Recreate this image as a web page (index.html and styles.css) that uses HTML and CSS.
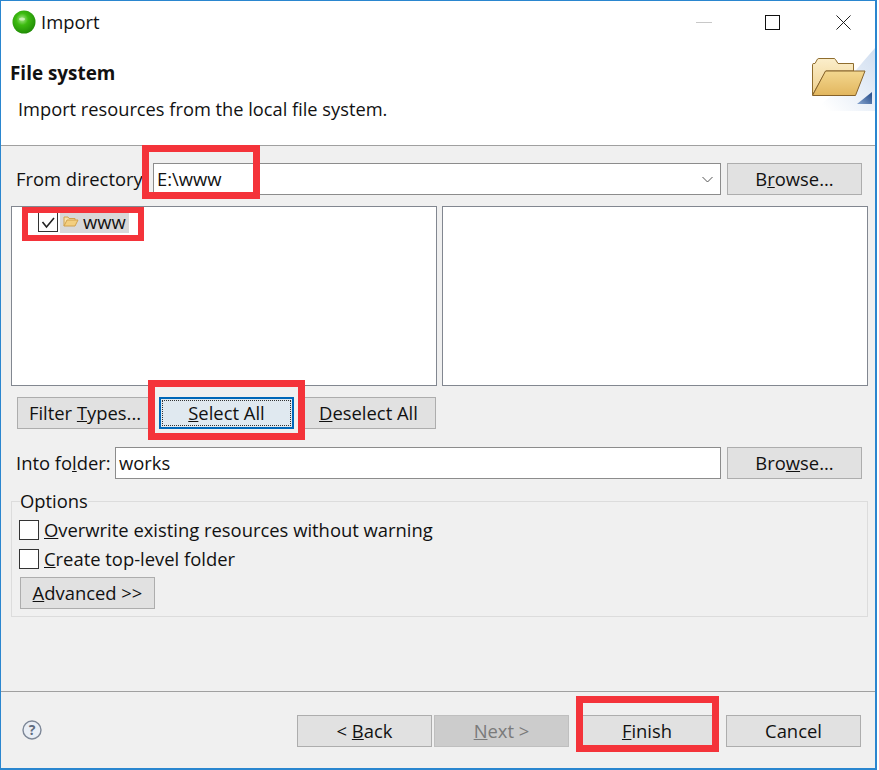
FILE: index.html
```html
<!DOCTYPE html>
<html lang="en">
<head>
<meta charset="utf-8">
<title>Import</title>
<link rel="stylesheet" href="styles.css">
</head>
<body>
<div class="window">
  <header class="titlebar">
    <svg class="app-icon" viewBox="0 0 24 24" aria-hidden="true">
      <defs>
        <radialGradient id="ball" cx="0.42" cy="0.38" r="0.65">
          <stop offset="0" stop-color="#a8e88c"/>
          <stop offset="0.4" stop-color="#3dbb10"/>
          <stop offset="1" stop-color="#1f8a06"/>
        </radialGradient>
      </defs>
      <circle cx="12" cy="12" r="11.5" fill="url(#ball)"/>
      <ellipse cx="10" cy="9" rx="3" ry="1.6" fill="#d4f3c2" opacity="0.8"/>
    </svg>
    <span class="title">Import</span>
    <div class="controls">
      <span class="ctl ctl-min"></span>
      <span class="ctl ctl-max"></span>
      <svg class="ctl-close" viewBox="0 0 16 16" aria-hidden="true"><path d="M0.5 0.5L15.5 15.5M15.5 0.5L0.5 15.5" stroke="#111" stroke-width="1" fill="none"/></svg>
    </div>
  </header>
  <section class="banner">
    <h1 class="banner-title">File system</h1>
    <p class="banner-desc">Import resources from the local file system.</p>
    <svg class="banner-art" viewBox="0 0 67 71" aria-hidden="true">
      <defs>
        <linearGradient id="wash" x1="0" y1="1" x2="1" y2="0.1">
          <stop offset="0.15" stop-color="#ffffff"/>
          <stop offset="1" stop-color="#d3e0f1"/>
        </linearGradient>
        <linearGradient id="folderFront" x1="0" y1="0" x2="0" y2="1">
          <stop offset="0" stop-color="#f3d78f"/>
          <stop offset="1" stop-color="#e2b65e"/>
        </linearGradient>
        <linearGradient id="folderBack" x1="0" y1="0" x2="0" y2="1">
          <stop offset="0" stop-color="#fbeecb"/>
          <stop offset="1" stop-color="#efd08c"/>
        </linearGradient>
        <linearGradient id="corner" x1="0.2" y1="1" x2="1" y2="0.3">
          <stop offset="0" stop-color="#7d9cc8"/>
          <stop offset="1" stop-color="#2f5590"/>
        </linearGradient>
      </defs>
      <path d="M67 8V71H2C26 58 46 32 67 8Z" fill="url(#wash)"/>
      <path d="M4.500 55V24.500Q4.500 23.500 6 23.500H7L9.500 19Q10 18.500 11 18.500H26Q27 18.500 27.500 19.500L30 23.500H45.500V31H18L4.500 55Z" fill="url(#folderBack)" stroke="#8f6d2e" stroke-width="1"/>
      <path d="M4.500 55.500L17.500 31H57L47.500 55.500Z" fill="url(#folderFront)" stroke="#86622a" stroke-width="1"/>
      <path d="M49 64L64 52V64Z" fill="url(#corner)"/>
    </svg>
  </section>
  <main class="content">
    <div class="row">
      <label class="row-label label-from">From directory</label>
      <div class="field combo"><span>E:\www</span>
        <svg class="chevron" viewBox="0 0 12 7" aria-hidden="true"><path d="M1 1L6 6L11 1" stroke="#555" stroke-width="1" fill="none"/></svg>
      </div>
      <button class="btn">B<u>r</u>owse...</button>
    </div>
    <div class="lists">
      <div class="list">
        <div class="tree-item">
          <span class="check checked">
            <svg viewBox="0 0 18 18" aria-hidden="true"><path d="M3.500 9L7.500 14L15 5" stroke="#222" stroke-width="1.600" fill="none"/></svg>
          </span>
          <span class="selected">
            <svg class="mini-folder" viewBox="0 0 16 12" aria-hidden="true">
              <path d="M1 11V2H5L6 3.500H12V5" fill="#f7e3ad" stroke="#d2a24c" stroke-width="1"/>
              <path d="M1 11L4 5H15L12 11Z" fill="#f3cf7f" stroke="#d2a24c" stroke-width="1"/>
            </svg>
            <span class="tree-text">www</span>
          </span>
        </div>
      </div>
      <div class="list"></div>
    </div>
    <div class="actions">
      <button class="btn btn-filter">Filter <u>T</u>ypes...</button>
      <button class="btn btn-focus"><span class="focus-ring"><u>S</u>elect All</span></button>
      <button class="btn btn-deselect"><u>D</u>eselect All</button>
    </div>
    <div class="row row-into">
      <label class="row-label label-into">Into fo<u>l</u>der:</label>
      <div class="field field-into"><span>works</span></div>
      <button class="btn">Bro<u>w</u>se...</button>
    </div>
    <fieldset class="options">
      <legend>Options</legend>
      <label class="option"><span class="check"></span><span><u>O</u>verwrite existing resources without warning</span></label>
      <label class="option"><span class="check"></span><span><u>C</u>reate top-level folder</span></label>
      <button class="btn btn-advanced"><u>A</u>dvanced &gt;&gt;</button>
    </fieldset>
  </main>
  <footer class="footer">
    <svg class="help" viewBox="0 0 20 20" aria-hidden="true">
      <circle cx="10" cy="10" r="9" fill="#e9eef5" stroke="#7d8797" stroke-width="1.400"/>
      <text x="10" y="15" text-anchor="middle" class="help-mark">?</text>
    </svg>
    <div class="nav">
      <button class="btn">&lt; <u>B</u>ack</button>
      <button class="btn btn-disabled"><u>N</u>ext &gt;</button>
      <button class="btn btn-finish"><u>F</u>inish</button>
      <button class="btn btn-cancel">Cancel</button>
    </div>
  </footer>
  <div class="mark mark-dir"></div>
  <div class="mark mark-tree"></div>
  <div class="mark mark-select"></div>
  <div class="mark mark-finish"></div>
</div>
</body>
</html>
```
FILE: styles.css
```css
* { box-sizing: border-box; }
html, body { margin: 0; padding: 0; }
body {
  width: 879px;
  height: 770px;
  overflow: hidden;
  background: #fff;
  font-family: "Open Sans", "Noto Sans", sans-serif;
  font-size: 18.4px;
  color: #111;
}
.window {
  position: relative;
  width: 877px;
  height: 770px;
  display: flex;
  flex-direction: column;
  background: #f0f0f0;
  border-top: 1px solid #2a86cf;
  border-left: 1px solid #2a86cf;
  border-right: 2px solid #2a86cf;
  border-bottom: 2px solid #2a86cf;
}
.titlebar {
  height: 44px;
  flex: none;
  display: flex;
  align-items: center;
  padding: 0 0 2px 11px;
  background: #fff;
}
.app-icon { width: 24px; height: 24px; }
.title { margin: 0 0 2px 5px; font-size: 18.4px; }
.controls {
  margin-left: auto;
  display: flex;
  align-items: center;
  padding-right: 24px;
}
.ctl-min { width: 16px; height: 1px; background: #c8c8c8; margin-right: 53px; }
.ctl-max { width: 15px; height: 15px; border: 1px solid #111; margin-right: 56px; }
.ctl-close { width: 15px; height: 15px; }
.banner {
  position: relative;
  height: 101px;
  flex: none;
  background: #fff;
  border-bottom: 1px solid #a0a0a0;
  padding-left: 9px;
}
.banner-title { margin: 16px 0 0; font-size: 18.9px; font-weight: 700; line-height: 24px; }
.banner-desc { margin: 12px 0 0 8px; line-height: 24px; font-size: 18.25px; }
.banner-art { position: absolute; right: 0; top: -5px; width: 67px; height: 71px; }
.content {
  flex: 1;
  padding: 17px 7px 0 10px;
}
.row { display: flex; align-items: stretch; height: 32px; }
.row-label { align-self: center; margin: 0 0 2px 5px; white-space: nowrap; }
.label-from { width: 137px; }
.label-into { width: 99px; }
.field {
  display: flex;
  align-items: center;
  background: #fff;
  border: 1px solid #8c8c8c;
  padding: 0 0 2px 3px;
  height: 32px;
}
.combo { width: 568px; position: relative; }
.field-into { width: 606px; padding-left: 3px; }
.chevron { position: absolute; right: 6px; top: 12px; width: 13px; height: 7px; }
.btn {
  width: 135px;
  height: 32px;
  padding: 0 0 2px;
  flex: none;
  font: inherit;
  color: #111;
  background: #e1e1e1;
  border: 1px solid #adadad;
}
.row .btn { margin-left: 6px; }
.lists { display: flex; gap: 5px; margin-top: 11px; height: 180px; }
.list {
  flex: none;
  width: 426px;
  background: #fff;
  border: 1px solid #828790;
}
.tree-item { display: flex; align-items: center; height: 30px; padding-left: 26px; }
.check {
  display: inline-block;
  width: 20px;
  height: 20px;
  flex: none;
  background: #fff;
  border: 1px solid #333;
}
.check svg { display: block; width: 18px; height: 18px; }
.selected {
  display: flex;
  align-items: center;
  height: 21px;
  background: #d9d9d9;
  margin-left: 2px;
  padding: 0 3px 2px 3px;
}
.mini-folder { width: 16px; height: 12px; }
.tree-text { margin-left: 4px; font-size: 18.4px; }
.actions { display: flex; margin-top: 11px; padding-left: 6px; }
.btn-filter { width: 133px; padding-left: 3px; }
.btn-focus {
  margin-left: 9px;
  background: #e0e9f0;
  border: 2px solid #0067b8;
  padding: 1px;
}
.focus-ring {
  display: flex;
  align-items: center;
  justify-content: center;
  height: 100%;
  padding-bottom: 2px;
  border: 1px dotted #333;
}
.btn-deselect { margin-left: 7px; }
.row-into { margin-top: 18px; }
.options {
  margin: 10px 0 0;
  padding: 2px 0 7px 8px;
  height: 128px;
  width: 857px;
  border: 1px solid #dcdcdc;
  min-width: 0;
}
.options legend { padding: 0; margin-left: 0; line-height: 24px; }
.option { display: flex; align-items: center; gap: 5px; height: 29px; margin-left: -1px; white-space: nowrap; }
.btn-advanced { display: block; margin-top: 4px; }
.footer {
  height: 77px;
  flex: none;
  border-top: 1px solid #a0a0a0;
  display: flex;
  align-items: flex-start;
  padding: 23px 14px 0 21px;
}
.help { width: 20px; height: 20px; margin-top: 5px; }
.help-mark { font-family: "Open Sans", sans-serif; font-size: 14px; font-weight: 700; fill: #5f6b7d; }
.nav { margin-left: auto; display: flex; }
.btn-disabled { margin-left: 2px; background: #cccccc; border-color: #bfbfbf; color: #7a7a7a; }
.btn-finish { margin-left: 13px; padding-right: 5px; }
.btn-cancel { margin-left: 9px; }
.mark { position: absolute; border: 7px solid #f4333a; pointer-events: none; }
.mark-dir { left: 141px; top: 144px; width: 118px; height: 54px; }
.mark-tree { left: 21px; top: 206px; width: 122px; height: 34px; border-width: 6px; }
.mark-select { left: 147px; top: 379px; width: 157px; height: 60px; }
.mark-finish { left: 575px; top: 695px; width: 143px; height: 56px; }
```
